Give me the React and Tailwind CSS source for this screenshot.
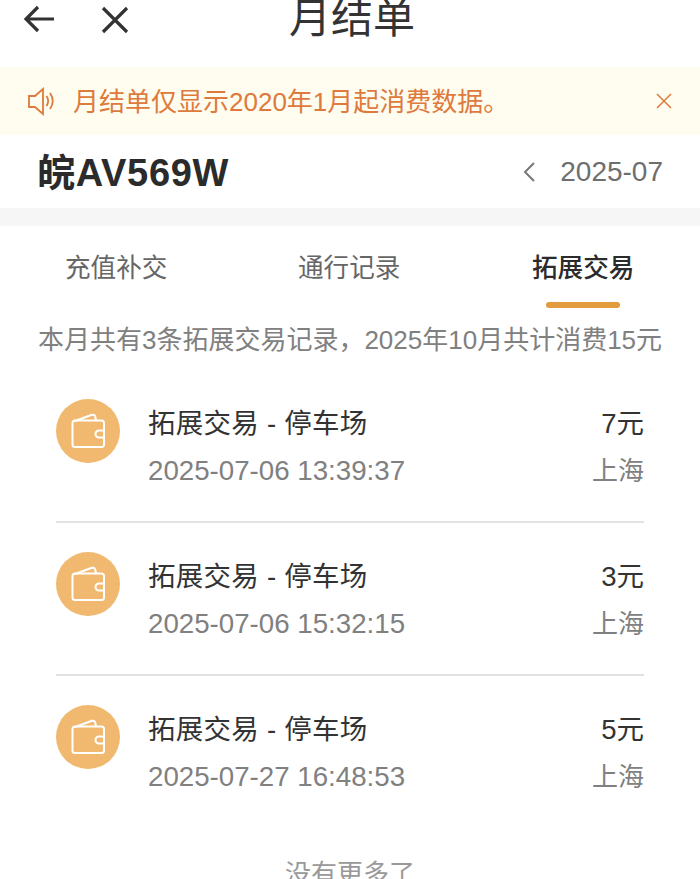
const FONT = "font-['Liberation_Sans','Noto_Sans_CJK_SC',sans-serif]"

const records = [
    { time: '2025-07-06 13:39:37', amount: '7元' },
    { time: '2025-07-06 15:32:15', amount: '3元' },
    { time: '2025-07-27 16:48:53', amount: '5元' },
]

function WalletIcon() {
    return (
        <svg width="36" height="36" viewBox="0 0 36 36" fill="none" stroke="#fff" strokeWidth="2" strokeLinejoin="round" strokeLinecap="round">
            <path d="M5 8L22 1.800c1.500-.5 2.800.3 3.200 1.700L26 7.500" />
            <path d="M5 7.500h26.500c1.500 0 2.500 1 2.500 2.500v21.500c0 1.500-1 2.500-2.500 2.500H5c-1.500 0-2.500-1-2.500-2.500V10c0-1.500 1-2.500 2.500-2.500z" />
            <path d="M34 17.500h-5c-1.900 0-3.500 1.500-3.500 3.500s1.600 3.500 3.500 3.500h5" />
        </svg>
    )
}

function RecordRow({ record, last }) {
    return (
        <div className={`flex h-[153px] items-start pt-[29px] ${last ? '' : 'border-b-2 border-[#e2e2e2]'}`}>
            <div className="w-16 h-16 rounded-full bg-[#f0b96f] flex items-center justify-center shrink-0">
                <WalletIcon />
            </div>
            <div className="ml-[28px] flex-1">
                <div className="flex justify-between items-center h-[48px] pt-[2px] text-[27.5px] text-[#333333]">
                    <span className="tracking-[0.25px]">拓展交易 - 停车场</span>
                    <span>{record.amount}</span>
                </div>
                <div className="flex justify-between items-center h-[48px] text-[27.7px] text-[#808080]">
                    <span>{record.time}</span>
                    <span className="text-[26px]">上海</span>
                </div>
            </div>
        </div>
    )
}

export default function App() {
    return (
        <div className={`h-[879px] w-[700px] overflow-hidden bg-white ${FONT}`}>
            <div className="h-[67px] flex items-center relative px-[22px] text-[#333333]">
                <svg width="34" height="34" viewBox="0 0 34 34" fill="none" stroke="#333" strokeWidth="3.200" className="mb-[29px]">
                    <path d="M32 17H5M16 5L4 17l12 12" />
                </svg>
                <svg width="30" height="30" viewBox="0 0 30 30" fill="none" stroke="#333" strokeWidth="3.200" className="ml-[43px] mb-[29px]">
                    <path d="M4 4l24 24M28 4L4 28" />
                </svg>
                <div className="absolute left-[4px] right-0 top-0 text-center text-[42px] leading-[38px]">月结单</div>
            </div>
            <div className="h-[68px] bg-[#fffcf0] flex items-center pl-[27px] pr-[28px] text-[#dd7a3c]">
                <svg width="30" height="30" viewBox="0 0 30 30" fill="none" stroke="#dd7a3c" strokeWidth="1.800">
                    <path d="M2 10h6l8-7v25l-8-7H2z" />
                    <path d="M19.500 10c2 3 2 7 0 10M23 7c3.500 5 3.500 11 0 16" />
                </svg>
                <span className="ml-[16px] mt-[2px] text-[26px] flex-1">月结单仅显示2020年1月起消费数据。</span>
                <svg width="16" height="16" viewBox="0 0 16 16" fill="none" stroke="#dd7a3c" strokeWidth="1.500">
                    <path d="M1 1l14 14M15 1L1 15" />
                </svg>
            </div>
            <div className="h-[73px] flex items-center justify-between pl-[37px] pr-[37px]">
                <span className="text-[38px] mt-[3px] font-bold tracking-[0.7px] text-[#2b2b2b]">皖AV569W</span>
                <div className="flex items-center text-[28px] text-[#6e6e6e]">
                    <svg width="14" height="22" viewBox="0 0 14 22" fill="none" stroke="#777" strokeWidth="2">
                        <path d="M12 2L3 11l9 9" />
                    </svg>
                    <span className="ml-[24px]">2025-07</span>
                </div>
            </div>
            <div className="h-[18px] bg-[#f6f6f6]" />
            <div className="h-[84px] relative text-[25.6px] text-[#666666] flex pt-[23px]">
                <span className="w-[234px] pl-[65px]">充值补交</span>
                <span className="w-[234px] pl-[64px]">通行记录</span>
                <span className="flex-1 pl-[64px] text-[#2b2b2b] font-medium">拓展交易</span>
                <div className="absolute left-[546px] top-[76px] w-[74px] h-[6px] rounded-full bg-[#e29c3e]" />
            </div>
            <div className="text-center text-[26px] text-[#808080] mt-[12px] leading-[36px]">本月共有3条拓展交易记录，2025年10月共计消费15元</div>
            <div className="mx-[56px] mt-[12px]">
                {records.map((r, i) => (
                    <RecordRow key={r.time} record={r} last={i === records.length - 1} />
                ))}
            </div>
            <div className="text-center text-[26px] leading-[36px] text-[#999999] mt-[27px]">没有更多了</div>
        </div>
    )
}
